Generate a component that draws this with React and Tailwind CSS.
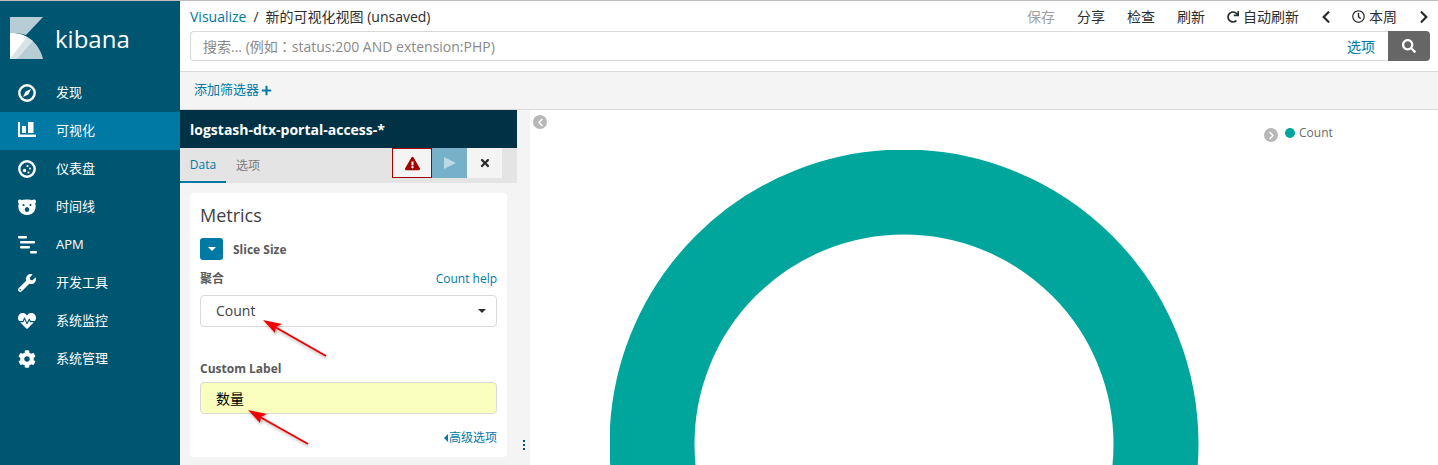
import { FaWrench, FaHeartbeat, FaCog, FaSearch, FaPlus, FaTimes, FaChevronLeft, FaChevronRight, FaRedo, FaRegClock, FaExclamationTriangle } from "react-icons/fa";

const font = "font-['Open_Sans','Noto_Sans_CJK_SC',sans-serif]";

function KibanaLogo() {
  return (
    <svg width="33" height="42" viewBox="0 0 33 42">
      <path d="M0 0H33L16 18C11 16.5 5 16 0 16Z" fill="#b7cdd5" />
      <path d="M0 16C15 15 29 25 33 42H0Z" fill="#b7cdd5" />
      <path d="M0 42L17 20L23 24L7 42Z" fill="#d7e3e7" />
      <path d="M0 16C6 16 12 17 17 20L0 42Z" fill="#fff" />
    </svg>
  );
}

function CompassIcon() {
  return (
    <svg width="18" height="18" viewBox="0 0 18 18">
      <circle cx="9" cy="9" r="7.7" fill="none" stroke="#fff" strokeWidth="2.4" />
      <path d="M13 5L10.4 10.4L5 13L7.6 7.6Z" fill="#fff" />
    </svg>
  );
}

function BarsIcon() {
  return (
    <svg className="mb-[3px]" width="18" height="15" viewBox="0 0 18 15" fill="#fff">
      <rect x="0" y="0" width="2" height="15" />
      <rect x="0" y="12.6" width="18" height="2.4" />
      <rect x="4" y="4" width="4" height="7" />
      <rect x="10" y="0" width="5.5" height="11" />
    </svg>
  );
}

function DashIcon() {
  return (
    <svg width="18" height="18" viewBox="0 0 18 18">
      <circle cx="9" cy="9" r="7.7" fill="none" stroke="#fff" strokeWidth="2.4" />
      <circle cx="6.5" cy="10.5" r="1.7" fill="#fff" />
      <circle cx="9.5" cy="6" r="1.1" fill="#fff" />
      <circle cx="12" cy="8.5" r="1" fill="#fff" />
      <circle cx="10.5" cy="12.5" r="1.1" fill="#fff" />
    </svg>
  );
}

function BearIcon() {
  return (
    <svg width="18" height="16" viewBox="0 0 18 16">
      <path d="M0 2.5C0 0.5 2.5 0 4 1.2C6.5 0.4 11.5 0.4 14 1.2C15.5 0 18 0.5 18 2.5C18 3.5 17.6 4 17.2 4.5C18 7 17.8 10 16.5 12C15 14.6 12 16 9 16S3 14.6 1.5 12C0.2 10 0 7 0.8 4.5C0.4 4 0 3.5 0 2.5Z" fill="#fff" />
      <circle cx="5.5" cy="6" r="1.1" fill="#005571" />
      <circle cx="12.5" cy="6" r="1.1" fill="#005571" />
      <ellipse cx="9" cy="10.5" rx="2.2" ry="2.6" fill="#005571" />
    </svg>
  );
}

function ApmIcon() {
  return (
    <svg width="20" height="18" viewBox="0 0 20 18" fill="#fff">
      <rect x="0" y="0" width="9" height="2.5" rx="1" />
      <rect x="2" y="5" width="15" height="2.5" rx="1" />
      <rect x="2" y="10" width="10" height="2.5" rx="1" />
      <rect x="12" y="15" width="7" height="2.5" rx="1" />
    </svg>
  );
}

function Nav({ icon, label, active }) {
  return (
    <div className={`flex h-[38px] items-center pb-[1px] pl-[18px] text-[13px] text-white ${active ? "bg-[#0079a5]" : ""}`}>
      <div className="flex w-[38px] items-center">{icon}</div>
      <span>{label}</span>
    </div>
  );
}

function Arrow({ className, tail }) {
  return (
    <svg className={`absolute ${className}`} width="72" height="50" viewBox="0 0 72 50">
      <defs>
        <filter id="s" x="-20%" y="-20%" width="140%" height="140%">
          <feDropShadow dx="1" dy="2" stdDeviation="1.5" floodColor="#000" floodOpacity="0.3" />
        </filter>
      </defs>
      <g filter="url(#s)">
        <path d={`M${tail} L14 9`} stroke="#f00000" strokeWidth="2" fill="none" />
        <path d="M2 2L21 6L15 9L14 15Z" fill="#f00000" />
      </g>
    </svg>
  );
}

export default function App() {
  return (
    <div className={`flex h-[465px] w-[1438px] overflow-hidden border-t border-[#bdbdbd] bg-white ${font}`}>
      <aside className="w-[180px] shrink-0 bg-[#005571]">
        <div className="flex h-[73px] items-center pl-[10px]">
          <KibanaLogo />
          <span className="ml-[12px] mt-[2px] text-[24px] leading-none text-white">kibana</span>
        </div>
        <nav>
          <Nav icon={<CompassIcon />} label="发现" />
          <Nav active icon={<BarsIcon />} label="可视化" />
          <Nav icon={<DashIcon />} label="仪表盘" />
          <Nav icon={<BearIcon />} label="时间线" />
          <Nav icon={<ApmIcon />} label="APM" />
          <Nav icon={<FaWrench size={18} color="#fff" />} label="开发工具" />
          <Nav icon={<FaHeartbeat size={18} color="#fff" />} label="系统监控" />
          <Nav icon={<FaCog size={18} color="#fff" />} label="系统管理" />
        </nav>
      </aside>

      <main className="flex min-w-0 flex-1 flex-col">
        <header className="h-[71px] border-b border-[#d9d9d9] px-[10px]">
          <div className="flex h-[30px] items-center justify-between pt-[1px] text-[14px] text-[#2d2d2d]">
            <div>
              <span className="text-[#0079a5]">Visualize</span>
              <span className="mx-[7px]">/</span>
              <span>新的可视化视图 (unsaved)</span>
            </div>
            <div className="flex items-center">
              <span className="text-[#a0a0a0]">保存</span>
              <span className="ml-[22px]">分享</span>
              <span className="ml-[22px]">检查</span>
              <span className="ml-[22px]">刷新</span>
              <FaRedo className="ml-[22px]" size={12} />
              <span className="ml-[4px]">自动刷新</span>
              <FaChevronLeft className="ml-[20px]" size={14} />
              <FaRegClock className="ml-[19px]" size={13} />
              <span className="ml-[4px]">本周</span>
              <FaChevronRight className="ml-[20px] -mr-[3px]" size={14} />
            </div>
          </div>
          <div className="flex h-[30px] w-[1240px]">
            <div className="flex flex-1 items-center justify-between rounded-l-[4px] border border-r-0 border-[#d9d9d9] pl-[12px] pr-[13px] text-[14px]">
              <span className="text-[#8a8a8a]">
                搜索... (例如<span className="font-['Noto_Sans_CJK_TC']">：</span>status:200 AND extension:PHP)
              </span>
              <span className="text-[#0079a5]">选项</span>
            </div>
            <div className="flex w-[42px] items-center justify-center rounded-r-[4px] bg-[#666666]">
              <FaSearch size={14} color="#fff" />
            </div>
          </div>
        </header>

        <div className="flex h-[38px] items-center border-b border-[#d9d9d9] bg-[#f4f4f4] pb-[1px] pl-[14px] text-[13px] text-[#0079a5]">
          添加筛选器
          <FaPlus className="ml-[2px]" size={11} />
        </div>

        <div className="relative flex min-h-0 flex-1">
          <section className="w-[337px] shrink-0 bg-[#f4f4f4]">
            <div className="flex h-[38px] items-center bg-[#003145] pl-[10px] text-[14px] font-bold text-white">
              logstash-dtx-portal-access-*
            </div>
            <div className="flex h-[35px] bg-[#e4e4e4] pr-[15px]">
              <div className="flex h-[35px] w-[46px] items-center justify-center border-b-[2px] border-[#0079a5] text-[12px] text-[#0079a5]">Data</div>
              <div className="ml-[10px] flex items-center text-[12px] text-[#7b7b7b]">选项</div>
              <div className="ml-auto flex h-[30px]">
                <div className="flex w-[40px] items-center justify-center border border-[#a30000] bg-[#f4f4f4]">
                  <FaExclamationTriangle size={15} color="#a30000" />
                </div>
                <div className="flex w-[35px] items-center justify-center bg-[#76b1c9]">
                  <div className="h-0 w-0 border-y-[6.5px] border-l-[12px] border-y-transparent border-l-[#bcd8e4]" />
                </div>
                <div className="flex w-[35px] items-center justify-center bg-[#f4f4f4]">
                  <FaTimes size={12} color="#2d2d2d" />
                </div>
              </div>
            </div>

            <div className="mx-[10px] mt-[10px] h-[264px] rounded-[4px] bg-white px-[10px] pt-[10px]">
              <div className="text-[18px] leading-[25px] text-[#3f3f46]">Metrics</div>
              <div className="mt-[10px] flex items-center">
                <div className="flex h-[22px] w-[23px] items-center justify-center rounded-[3px] bg-[#0079a5]">
                  <div className="h-0 w-0 border-x-[4px] border-t-[4px] border-x-transparent border-t-white" />
                </div>
                <span className="ml-[10px] pt-[2px] text-[12px] font-bold text-[#5a5a5a]">Slice Size</span>
              </div>
              <div className="mt-[10px] flex items-center justify-between text-[12px]">
                <span className="font-bold text-[#5a5a5a]">聚合</span>
                <span className="text-[#0079a5]">Count help</span>
              </div>
              <div className="mt-[7px] flex h-[32px] items-center justify-between rounded-[4px] border border-[#d9d9d9] pb-[1px] pl-[15px] pr-[10px] text-[14px] text-[#3f3f46]">
                Count
                <div className="h-0 w-0 border-x-[4px] border-t-[4px] border-x-transparent border-t-[#2d2d2d]" />
              </div>
              <div className="mt-[33px] text-[12px] font-bold text-[#5a5a5a]">Custom Label</div>
              <div className="mt-[4px] flex h-[32px] items-center rounded-[4px] border border-[#d9d9d9] bg-[#fbffbd] pl-[15px] text-[14px] text-black">数量</div>
              <div className="mt-[15px] flex items-center justify-end text-[12px] text-[#0079a5]">
                <div className="mr-[1px] h-0 w-0 border-y-[4px] border-r-[4px] border-y-transparent border-r-[#0079a5]" />
                高级选项
              </div>
            </div>
          </section>

          <div className="flex w-[13px] shrink-0 items-end justify-center bg-[#f4f4f4] pb-[15px]">
            <div className="flex flex-col gap-[2px]">
              <div className="h-[2px] w-[2px] bg-[#005571]" />
              <div className="h-[2px] w-[2px] bg-[#005571]" />
              <div className="h-[2px] w-[2px] bg-[#005571]" />
            </div>
          </div>

          <section className="relative min-w-0 flex-1 overflow-hidden">
            <div className="absolute left-[3px] top-[5px] flex h-[14px] w-[14px] items-center justify-center rounded-full bg-[#b8b8b8]">
              <FaChevronLeft size={9} color="#fff" />
            </div>
            <div className="absolute left-[734px] top-[18px] flex h-[14px] w-[14px] items-center justify-center rounded-full bg-[#b8b8b8]">
              <FaChevronRight size={9} color="#fff" />
            </div>
            <div className="absolute left-[755px] top-[14px] flex items-center text-[12px] text-[#6b6b6b]">
              <div className="mr-[4px] h-[10px] w-[10px] rounded-full bg-[#00a69b]" />
              Count
            </div>
            <svg className="absolute left-[80px] top-[40px]" width="590" height="320" viewBox="0 0 590 320">
              <circle cx="294" cy="294" r="252" fill="none" stroke="#00a69b" strokeWidth="85" />
            </svg>
          </section>

          <Arrow className="left-[81px] top-[208px]" tail="65 38" />
          <Arrow className="left-[66px] top-[298px]" tail="62 36" />
        </div>
      </main>
    </div>
  );
}
